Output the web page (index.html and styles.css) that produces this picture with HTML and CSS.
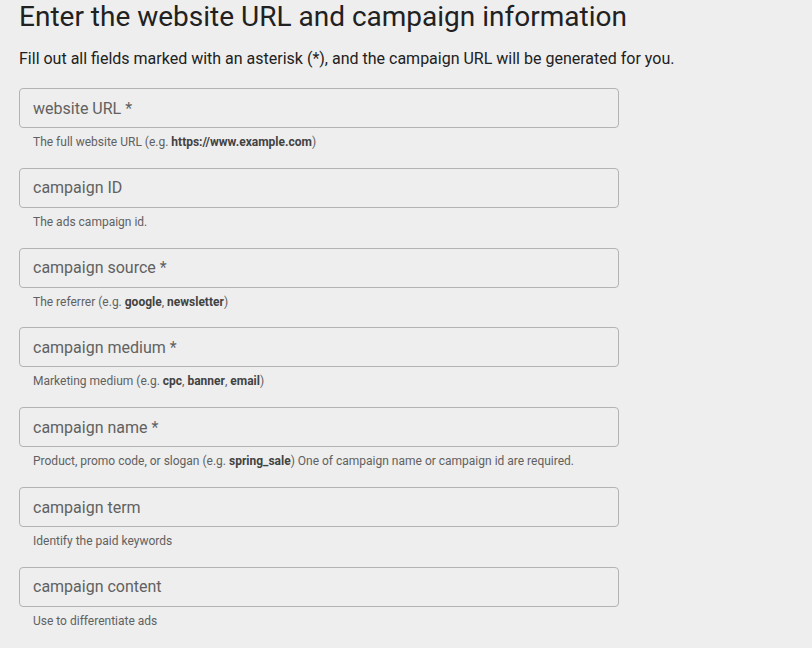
FILE: index.html
```html
<!DOCTYPE html>
<html lang="en">
<head>
<meta charset="utf-8">
<title>Campaign URL Builder</title>
<link rel="stylesheet" href="styles.css">
</head>
<body>
<main class="page">
  <h1 class="title">Enter the website URL and campaign information</h1>
  <p class="intro">Fill out all fields marked with an asterisk (*), and the campaign URL will be generated for you.</p>
  <form class="form">
    <div class="field">
      <input class="input" type="text" placeholder="website URL *">
      <div class="hint">The full website URL (e.g. <b>https://www.example.com</b>)</div>
    </div>
    <div class="field">
      <input class="input" type="text" placeholder="campaign ID">
      <div class="hint">The ads campaign id.</div>
    </div>
    <div class="field">
      <input class="input" type="text" placeholder="campaign source *">
      <div class="hint">The referrer (e.g. <b>google</b>, <b>newsletter</b>)</div>
    </div>
    <div class="field">
      <input class="input" type="text" placeholder="campaign medium *">
      <div class="hint">Marketing medium (e.g. <b>cpc</b>, <b>banner</b>, <b>email</b>)</div>
    </div>
    <div class="field">
      <input class="input" type="text" placeholder="campaign name *">
      <div class="hint">Product, promo code, or slogan (e.g. <b>spring_sale</b>) One of campaign name or campaign id are required.</div>
    </div>
    <div class="field">
      <input class="input" type="text" placeholder="campaign term">
      <div class="hint">Identify the paid keywords</div>
    </div>
    <div class="field">
      <input class="input" type="text" placeholder="campaign content">
      <div class="hint">Use to differentiate ads</div>
    </div>
  </form>
</main>
</body>
</html>
```

FILE: styles.css
```css
html, body {
  margin: 0;
  padding: 0;
  background: #eeeeee;
}
body {
  font-family: Roboto, "Liberation Sans", sans-serif;
  color: #212121;
}
.page {
  padding: 0 19px;
}
.title {
  margin: 0;
  font-size: 28px;
  font-weight: 400;
  line-height: 34px;
  color: #212121;
}
.intro {
  margin: 13px 0 0 0;
  font-size: 16px;
  line-height: 24px;
  color: #212121;
}
.form {
  margin-top: 17px;
  display: flex;
  flex-direction: column;
}
.field {
  display: flex;
  flex-direction: column;
  height: 79.83px;
}
.input {
  box-sizing: border-box;
  width: 600px;
  height: 40px;
  margin: 0;
  padding: 0 13px;
  border: 1px solid #b3b3b3;
  border-radius: 4px;
  background: #eeeeee;
  font-family: Roboto, "Liberation Sans", sans-serif;
  font-size: 16px;
  color: #212121;
  outline: none;
}
.input::placeholder {
  color: #616161;
  opacity: 1;
}
.hint {
  margin: 6px 0 0 14px;
  font-size: 12px;
  line-height: 16px;
  color: #616161;
}
.hint b {
  font-weight: 700;
  color: #424242;
}
```
